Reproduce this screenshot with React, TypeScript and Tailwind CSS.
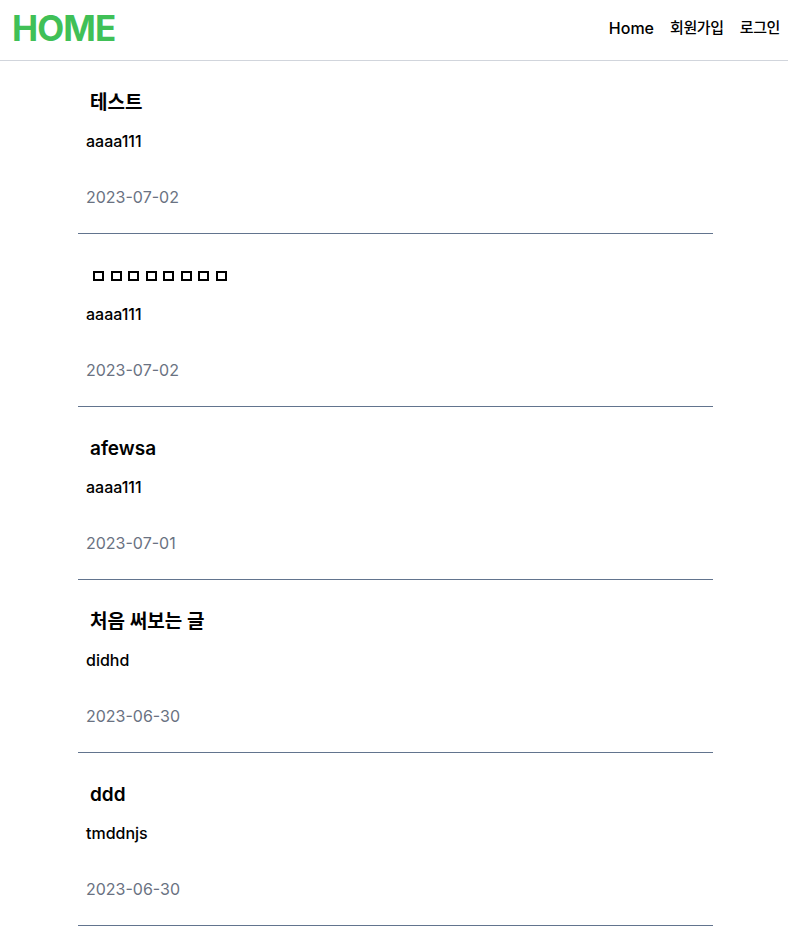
import React from 'react';

type Post = { title: string; author: string; date: string; broken?: boolean };

const posts: Post[] = [
  { title: '테스트', author: 'aaaa111', date: '2023-07-02' },
  { title: '', author: 'aaaa111', date: '2023-07-02', broken: true },
  { title: 'afewsa', author: 'aaaa111', date: '2023-07-01' },
  { title: '처음 써보는 글', author: 'didhd', date: '2023-06-30' },
  { title: 'ddd', author: 'tmddnjs', date: '2023-06-30' },
];

const font = { fontFamily: 'Inter, "Noto Sans CJK KR", sans-serif' };

// title that the font could not render, shown as tofu boxes
const Tofu: React.FC = () => (
  <span className="flex items-center gap-[6.5px] h-7 pl-[3px]">
    {Array.from({ length: 8 }).map((_, i) => (
      <span key={i} className="inline-block w-[11px] h-[10px] border-2 border-black" />
    ))}
  </span>
);

const App: React.FC = () => {
  return (
    <div className="min-h-screen bg-white text-black" style={font}>
      <header className="flex items-center justify-between h-[61px] border-b border-gray-300 pl-3 pr-2">
        <h1 className="text-[35px] font-bold text-[#40c057] tracking-tight leading-none -mt-1">HOME</h1>
        <nav className="flex items-center gap-4 text-base font-medium -mt-1">
          <a>Home</a>
          <a className="text-[15px] tracking-tight">회원가입</a>
          <a className="text-[15px] tracking-tight">로그인</a>
        </nav>
      </header>
      <ul className="ml-[78px] w-[635px]">
        {posts.map((post, index) => (
          <li key={index} className="border-b border-slate-500 pt-7 pb-6">
            <div className="pl-3 text-[19px] font-semibold leading-7">
              {post.broken ? <Tofu /> : post.title}
            </div>
            <div className="pl-2 mt-3 text-base font-medium leading-6">{post.author}</div>
            <div className="pl-2 mt-8 text-base text-gray-500 leading-6">{post.date}</div>
          </li>
        ))}
      </ul>
    </div>
  );
};

export default App;
